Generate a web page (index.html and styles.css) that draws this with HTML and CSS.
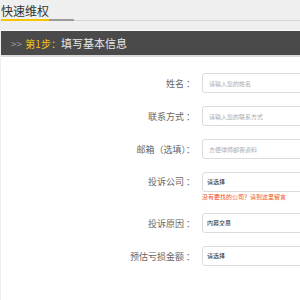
FILE: index.html
```html
<!DOCTYPE html>
<html lang="zh-CN">
<head>
    <meta charset="UTF-8">
    <meta name="viewport" content="width=device-width, initial-scale=1.0">
    <title>快速维权</title>
    <link rel="stylesheet" href="styles.css">
</head>
<body>
    <div class="page">
        <div class="tabs">
            <div class="tab-active">快速维权</div>
            <div class="tab-rest"></div>
        </div>

        <div class="step-bar">
            <span class="arrows">&gt;&gt;</span>
            <span class="step-no">第1步：</span><span class="step-name">填写基本信息</span>
        </div>

        <div class="form-panel">
            <div class="form-row">
                <label class="form-label">姓名 ：</label>
                <input type="text" class="form-input" placeholder="请输入您的姓名">
            </div>
            <div class="form-row">
                <label class="form-label">联系方式 ：</label>
                <input type="text" class="form-input" placeholder="请输入您的联系方式">
            </div>
            <div class="form-row">
                <label class="form-label">邮箱（选填）：</label>
                <input type="text" class="form-input" placeholder="方便律师邮寄资料">
            </div>
            <div class="form-row with-tip">
                <label class="form-label">投诉公司 ：</label>
                <div class="field">
                    <div class="form-select">请选择</div>
                    <div class="tip">没有要找的公司？请到这里留言</div>
                </div>
            </div>
            <div class="form-row">
                <label class="form-label">投诉原因 ：</label>
                <div class="form-select">内幕交易</div>
            </div>
            <div class="form-row">
                <label class="form-label">预估亏损金额 ：</label>
                <div class="form-select">请选择</div>
            </div>
        </div>
    </div>
</body>
</html>
```

FILE: styles.css
```css
body {
    margin: 0;
    background-color: #efefef;
    font-family: "Noto Sans CJK SC", "Noto Sans", sans-serif;
    overflow: hidden;
}
.page {
    width: 299px;
    padding-left: 1px;
    overflow: hidden;
}
.tabs {
    display: flex;
    align-items: flex-end;
    height: 20px;
    border-bottom: 1px solid #d4d4d4;
}
.tab-active {
    font-size: 12px;
    line-height: 17px;
    color: #333;
    border-bottom: 2px solid #f5c400;
    margin-bottom: -1px;
}
.tab-rest {
    width: 25px;
    border-bottom: 2px solid #9a9a9a;
    margin-bottom: -1px;
}
.step-bar {
    margin-top: 9px;
    height: 24px;
    line-height: 24px;
    background-color: #4a4a4a;
    border-top: 1px solid #fafafa;
    border-bottom: 2px solid #dcdcdc;
    padding-left: 10px;
    font-size: 10px;
    color: #e8e8e8;
}
.arrows {
    color: #9a9a9a;
    margin-right: 1px;
}
.step-no {
    color: #f0c419;
}
.step-name {
    font-size: 11px;
}
.form-panel {
    background-color: #fff;
    padding: 16px 0 28px;
}
.form-row {
    display: flex;
    align-items: center;
    height: 20px;
    margin-bottom: 13px;
}
.form-row.with-tip {
    height: auto;
    align-items: flex-start;
    margin-bottom: 12px;
}
.with-tip .form-label {
    line-height: 20px;
}
.form-label {
    width: 194px;
    flex-shrink: 0;
    text-align: right;
    font-size: 9px;
    color: #666;
}
.form-input,
.form-select {
    margin-left: 7px;
    width: 120px;
    flex-shrink: 0;
    height: 20px;
    box-sizing: border-box;
    border: 1px solid #dcdcdc;
    border-radius: 3px;
    padding: 0 6px;
    font-family: inherit;
    font-size: 6px;
    color: #222;
    outline: none;
}
.form-input::placeholder {
    color: #aaa;
}
.form-select {
    line-height: 18px;
    padding-left: 4px;
}
.tip {
    margin-left: 7px;
    font-size: 6px;
    line-height: 9px;
    color: #f0502a;
}
```
